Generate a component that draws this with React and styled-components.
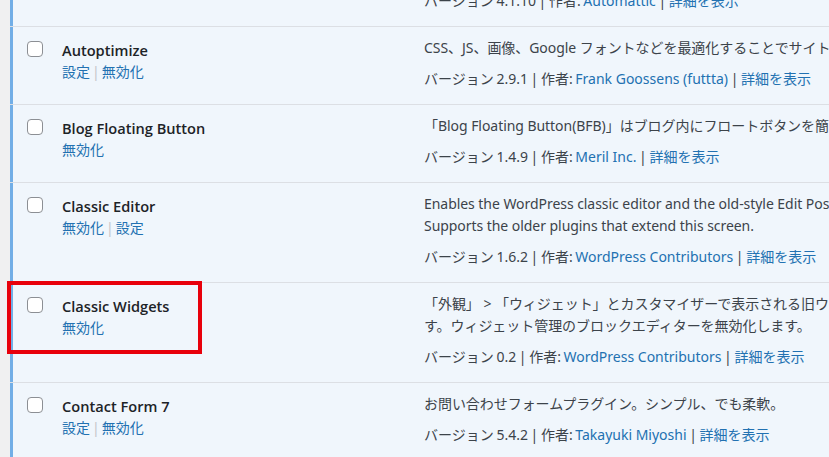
import React from 'react';
import styled, { createGlobalStyle } from 'styled-components';

const GlobalStyle = createGlobalStyle`
  html, body {
    margin: 0;
    padding: 0;
    overflow: hidden;
    background: #f0f0f1;
  }
  body {
    font-family: "Noto Sans", "Noto Sans CJK JP", sans-serif;
    font-size: 14px;
    color: #3c434a;
  }
`;

const Page = styled.div`
  display: flex;
  width: 829px;
  height: 457px;
  overflow: hidden;
`;

const Gutter = styled.div`
  flex: 0 0 10px;
  background: #f0f0f1;
`;

const List = styled.div`
  flex: 1;
  margin-top: -10px;
  background: #f0f6fc;
  min-width: 0;
`;

const Row = styled.div`
  position: relative;
  display: grid;
  grid-template-columns: 52px 362px 1fr;
  border-top: ${({ first }) => (first ? 'none' : '1px solid #dcdfe4')};
  background: #f0f6fc;
`;

const CheckCell = styled.div`
  box-shadow: inset 3px 0 0 #72aee6;
  padding: 14px 0 0 17px;
`;

const Checkbox = styled.span`
  display: block;
  width: 16px;
  height: 16px;
  box-sizing: border-box;
  border: 1px solid #8c8f94;
  border-radius: 4px;
  background: #fff;
`;

const NameCell = styled.div`
  padding-top: 12px;
`;

const Title = styled.div`
  font-family: "Open Sans", "Noto Sans", sans-serif;
  font-size: 14.6px;
  font-weight: 600;
  color: #1d2327;
  line-height: 22px;
  white-space: nowrap;
`;

const Actions = styled.div`
  line-height: 22px;
  white-space: nowrap;
`;

const ActionLink = styled.a`
  color: #2271b1;
  text-decoration: none;
`;

const ActionSep = styled.span`
  color: #c3c4c7;
  margin: 0 2px;
`;

const DescCell = styled.div`
  padding: ${({ first }) => (first ? '0' : '10px')} 0 14px;
  white-space: nowrap;
  min-width: 0;
`;

const Description = styled.p`
  margin: 0 0 9px;
  line-height: 22px;
  letter-spacing: -0.05px;
  color: #3c434a;
`;

const Meta = styled.div`
  line-height: 22px;
  word-spacing: -1px;
  color: #3c434a;
`;

const MetaLink = styled.a`
  color: #2271b1;
  text-decoration: none;
  word-spacing: 0;
`;

const Highlight = styled.div`
  position: absolute;
  left: -3px;
  top: -2px;
  width: 195px;
  height: 73px;
  box-sizing: border-box;
  border: 4px solid #e8000b;
  pointer-events: none;
`;

const plugins = [
  {
    name: 'Autoptimize',
    actions: ['設定', '無効化'],
    desc: ['CSS、JS、画像、Google フォントなどを最適化することでサイトを高速化します。'],
    version: '2.9.1',
    author: 'Frank Goossens (futtta)',
  },
  {
    name: 'Blog Floating Button',
    actions: ['無効化'],
    desc: ['「Blog Floating Button(BFB)」はブログ内にフロートボタンを簡単に設置できるプラグインです。'],
    version: '1.4.9',
    author: 'Meril Inc.',
  },
  {
    name: 'Classic Editor',
    actions: ['無効化', '設定'],
    desc: [
      'Enables the WordPress classic editor and the old-style Edit Post screen with TinyMCE, Meta Boxes, etc.',
      'Supports the older plugins that extend this screen.',
    ],
    version: '1.6.2',
    author: 'WordPress Contributors',
  },
  {
    name: 'Classic Widgets',
    actions: ['無効化'],
    desc: [
      '「外観」 > 「ウィジェット」とカスタマイザーで表示される旧ウィジェット設定画面を有効化しま',
      'す。ウィジェット管理のブロックエディターを無効化します。',
    ],
    version: '0.2',
    author: 'WordPress Contributors',
    highlighted: true,
  },
  {
    name: 'Contact Form 7',
    actions: ['設定', '無効化'],
    desc: ['お問い合わせフォームプラグイン。シンプル、でも柔軟。'],
    version: '5.4.2',
    author: 'Takayuki Miyoshi',
  },
];

const VersionLine = ({ version, author }) => (
  <Meta>
    バージョン {version} | 作者: <MetaLink href="#">{author}</MetaLink> |{' '}
    <MetaLink href="#">詳細を表示</MetaLink>
  </Meta>
);

const PluginRow = ({ plugin }) => (
  <Row>
    <CheckCell>
      <Checkbox />
    </CheckCell>
    <NameCell>
      <Title>{plugin.name}</Title>
      <Actions>
        {plugin.actions.map((a, i) => (
          <React.Fragment key={a}>
            {i > 0 && <ActionSep>|</ActionSep>}
            <ActionLink href="#">{a}</ActionLink>
          </React.Fragment>
        ))}
      </Actions>
    </NameCell>
    <DescCell>
      <Description>
        {plugin.desc.map((line, i) => (
          <React.Fragment key={i}>
            {i > 0 && <br />}
            {line}
          </React.Fragment>
        ))}
      </Description>
      <VersionLine version={plugin.version} author={plugin.author} />
    </DescCell>
    {plugin.highlighted && <Highlight />}
  </Row>
);

const App = () => (
  <>
    <GlobalStyle />
    <Page>
      <Gutter />
      <List>
        <Row first>
          <CheckCell />
          <div />
          <DescCell first>
            <VersionLine version="4.1.10" author="Automattic" />
          </DescCell>
        </Row>
        {plugins.map((p) => (
          <PluginRow key={p.name} plugin={p} />
        ))}
      </List>
    </Page>
  </>
);

export default App;
